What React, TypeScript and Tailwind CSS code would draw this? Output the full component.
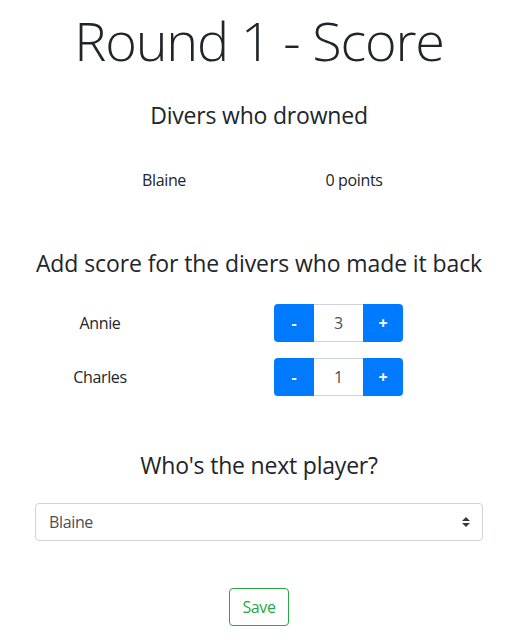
import { useState } from 'react';

const FONT = "font-['Open_Sans','Noto_Sans',sans-serif]";

function Stepper({ value, onChange }: { value: number; onChange: (v: number) => void }) {
  return (
    <div className="flex h-[38px] w-[129px]">
      <button
        onClick={() => onChange(value - 1)}
        className="w-[40px] bg-[#007bff] text-white font-bold text-base rounded-l-[4px]"
      >
        -
      </button>
      <div className="w-[49px] flex items-center justify-center border-y border-[#ced4da] text-[#495057] text-base">
        {value}
      </div>
      <button
        onClick={() => onChange(value + 1)}
        className="w-[40px] bg-[#007bff] text-white font-bold text-base rounded-r-[4px]"
      >
        +
      </button>
    </div>
  );
}

export default function App() {
  const [scores, setScores] = useState<Record<string, number>>({ Annie: 3, Charles: 1 });
  const [next, setNext] = useState('Blaine');

  return (
    <div className={`${FONT} w-[523px] min-h-[642px] bg-white text-[#212529] tracking-[-0.35px] flex flex-col items-center pl-[35px] pr-[40px]`}>
      <h1 className="text-[54px] font-light leading-[1.2] tracking-[-1.2px] mt-[8px]">Round 1 - Score</h1>

      <h4 className="text-[23px] leading-[1.2] tracking-[-0.2px] mt-[29px]">Divers who drowned</h4>
      <div className="flex w-[380px] mt-[39px] text-base">
        <div className="w-1/2 text-center">Blaine</div>
        <div className="w-1/2 text-center">0 points</div>
      </div>

      <h4 className="text-[23px] leading-[1.2] tracking-[-0.1px] mt-[58px] whitespace-nowrap">
        Add score for the divers who made it back
      </h4>
      <div className="flex flex-col gap-[16px] mt-[26px] w-full">
        {Object.entries(scores).map(([name, v]) => (
          <div key={name} className="flex items-center">
            <div className="w-[130px] text-center">{name}</div>
            <div className="ml-[109px]">
              <Stepper value={v} onChange={(n) => setScores({ ...scores, [name]: n })} />
            </div>
          </div>
        ))}
      </div>

      <h4 className="text-[23px] leading-[1.2] tracking-[-0.2px] mt-[56px]">Who's the next player?</h4>
      <div className="relative w-full mt-[23px]">
        <select
          value={next}
          onChange={(e) => setNext(e.target.value)}
          className="appearance-none w-full h-[38px] border border-[#ced4da] rounded-[4px] pl-[13px] text-base text-[#495057] bg-white"
        >
          <option>Blaine</option>
          <option>Annie</option>
          <option>Charles</option>
        </select>
        <svg className="absolute right-[13px] top-[14px] pointer-events-none" width="8" height="10" viewBox="0 0 4 5">
          <path fill="#343a40" d="M2 0L0 2h4zm0 5L0 3h4z" />
        </svg>
      </div>

      <button className="mt-[47px] h-[38px] px-[12px] border border-[#28a745] text-[#28a745] rounded-[4px] text-base">
        Save
      </button>
    </div>
  );
}
